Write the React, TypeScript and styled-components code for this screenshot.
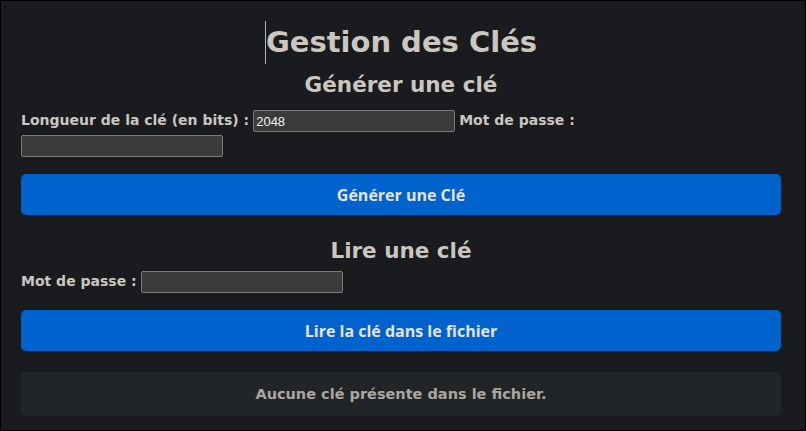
import React, { useState } from "react";
import styled, { createGlobalStyle } from "styled-components";

const GlobalStyle = createGlobalStyle`
  html, body {
    margin: 0;
    padding: 0;
    background: #1a1b1e;
  }
  * {
    box-sizing: border-box;
  }
`;

const Page = styled.div`
  min-height: 431px;
  border: 1px solid #000;
  padding: 0 24px 0 20px;
  background: #1a1b1e;
  color: #cbc6bf;
  font-family: "DejaVu Sans", "Noto Sans", sans-serif;
`;

const Title = styled.h1`
  margin: 20px 0 0;
  text-align: center;
  font-size: 29px;
  line-height: 43px;
  font-weight: 700;
`;

const Caret = styled.span`
  display: inline-block;
  vertical-align: top;
  width: 1px;
  height: 43px;
  background: #b9b4ad;
`;

const SectionTitle = styled.h2<{ $top: number }>`
  margin: ${({ $top }) => $top}px 0 0;
  text-align: center;
  font-size: 21.5px;
  line-height: 32px;
  font-weight: 700;
`;

const FieldRow = styled.div<{ $top: number }>`
  margin-top: ${({ $top }) => $top}px;
  font-size: 14px;
  font-weight: 700;
  line-height: 25px;
`;

const Label = styled.label`
  margin-right: 4px;
`;

const Input = styled.input`
  width: 202px;
  height: 22px;
  padding: 1px 2px;
  margin-right: 4px;
  vertical-align: middle;
  background: #3b3b3b;
  border: 1px solid #7a7a7a;
  border-radius: 2px;
  color: #f0f0f0;
  font-family: "Liberation Sans", Arial, sans-serif;
  font-size: 13px;
  outline: none;
`;

const ActionButton = styled.button<{ $top: number }>`
  display: block;
  width: 100%;
  height: 41px;
  margin-top: ${({ $top }) => $top}px;
  border: none;
  border-radius: 5px;
  background: #0062cc;
  color: #e6e4e1;
  font-family: "Open Sans", sans-serif;
  font-size: 16px;
  font-weight: 700;
  cursor: pointer;
`;

const Status = styled.div`
  margin-top: 21px;
  height: 44px;
  display: flex;
  align-items: center;
  justify-content: center;
  border-radius: 5px;
  background: #222527;
  color: #aca69e;
  font-size: 14.5px;
  font-weight: 700;
`;

export default function App() {
  const [bits, setBits] = useState<string>("2048");
  const [genPass, setGenPass] = useState<string>("");
  const [readPass, setReadPass] = useState<string>("");

  return (
    <>
      <GlobalStyle />
      <Page>
        <Title>
          <Caret />
          Gestion des Clés
        </Title>

        <SectionTitle $top={5}>Générer une clé</SectionTitle>
        <FieldRow $top={7}>
          <Label htmlFor="bits">Longueur de la clé (en bits) :</Label>
          <Input
            id="bits"
            type="text"
            value={bits}
            onChange={(e) => setBits(e.target.value)}
          />
          <Label htmlFor="gen-pass">Mot de passe :</Label>
          <Input
            id="gen-pass"
            type="password"
            value={genPass}
            onChange={(e) => setGenPass(e.target.value)}
          />
        </FieldRow>
        <ActionButton $top={16}>Générer une Clé</ActionButton>

        <SectionTitle $top={20}>Lire une clé</SectionTitle>
        <FieldRow $top={2}>
          <Label htmlFor="read-pass">Mot de passe :</Label>
          <Input
            id="read-pass"
            type="password"
            value={readPass}
            onChange={(e) => setReadPass(e.target.value)}
          />
        </FieldRow>
        <ActionButton $top={16}>Lire la clé dans le fichier</ActionButton>

        <Status>Aucune clé présente dans le fichier.</Status>
      </Page>
    </>
  );
}
